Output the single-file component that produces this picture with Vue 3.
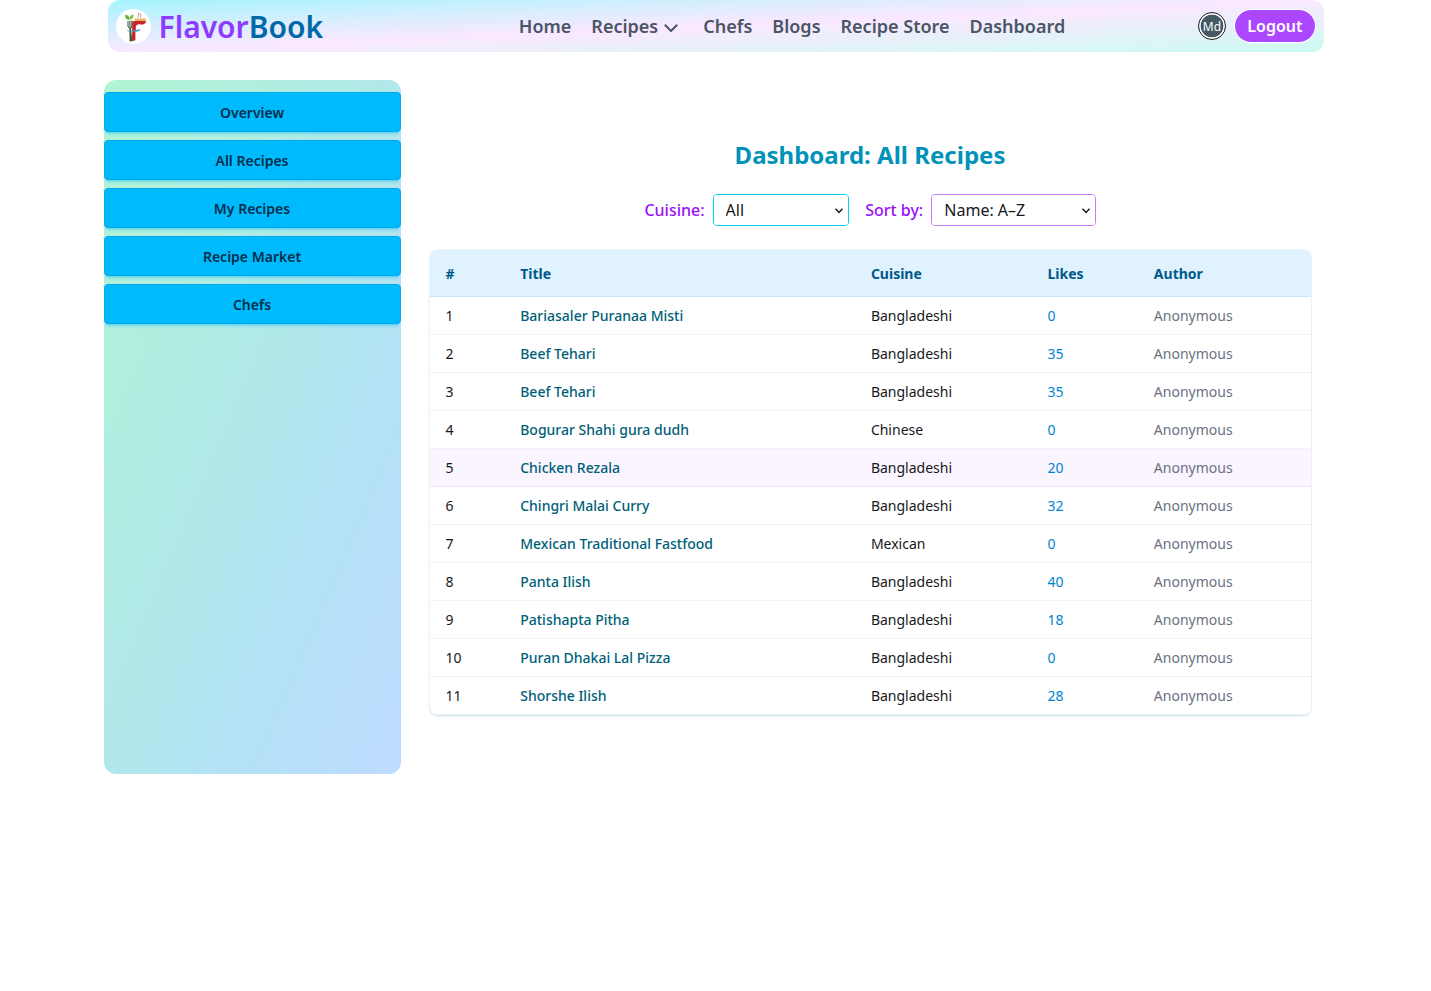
<script setup>
const links = ['Home', 'Recipes', 'Chefs', 'Blogs', 'Recipe Store', 'Dashboard']
const menu = ['Overview', 'All Recipes', 'My Recipes', 'Recipe Market', 'Chefs']
const rows = [
  ['Bariasaler Puranaa Misti', 'Bangladeshi', 0],
  ['Beef Tehari', 'Bangladeshi', 35],
  ['Beef Tehari', 'Bangladeshi', 35],
  ['Bogurar Shahi gura dudh', 'Chinese', 0],
  ['Chicken Rezala', 'Bangladeshi', 20],
  ['Chingri Malai Curry', 'Bangladeshi', 32],
  ['Mexican Traditional Fastfood', 'Mexican', 0],
  ['Panta Ilish', 'Bangladeshi', 40],
  ['Patishapta Pitha', 'Bangladeshi', 18],
  ['Puran Dhakai Lal Pizza', 'Bangladeshi', 0],
  ['Shorshe Ilish', 'Bangladeshi', 28],
]
</script>

<template>
  <div class="page">
    <header class="navbar">
      <div class="brand">
        <svg class="logo" viewBox="0 0 35 35">
          <circle cx="17.5" cy="17.5" r="17.5" fill="#fff" />
          <path d="M13.200 10.800C10 11 9.200 8.500 9 5.800C12 6 13.700 7.500 13.200 10.800Z" fill="#63b238" />
          <path d="M13.400 10.500C13.200 7.500 15 5.800 17.600 5.400C17.700 8.500 16.500 10 13.400 10.500Z" fill="#7cc242" />
          <path d="M22.300 8.600C20.800 7.200 24 6.300 22.600 3.800M24.800 8.600C23.500 7.200 26 6.500 24.600 4.600" fill="none" stroke="#cf7777" stroke-width=".9" />
          <path d="M18.300 9.600H30.200L29.400 12.300H19.500Z" fill="#e5b866" />
          <path d="M16.200 12.600Q17.500 11.600 20 12H30C29.800 14.500 27.800 16.200 25 15.400Q20.500 14.600 19.800 17.500V20.200L19.400 24V31Q17.500 32.500 15.600 31.800L16.200 24Z" fill="#c92228" />
          <path d="M12 12V17Q12.200 19 14 19Q15.800 19 15.800 17V11.500M13.900 11.500V18" fill="none" stroke="#466047" stroke-width="1.100" />
          <path d="M13.300 18.500H14.900L16.300 31.500Q15.300 33.500 13.600 32Z" fill="#455d3e" />
          <path d="M9.300 20.300Q12 22.300 16 21.500Q21 20.500 24.800 20.200Q23 23 17 22.800Q12 23 9.300 20.300Z" fill="#459dbb" />
        </svg>
        <span class="name"><span class="flavor">Flavor</span><span class="book">Book</span></span>
      </div>
      <nav class="links">
        <a v-for="l in links" :key="l">{{ l }}<svg v-if="l === 'Recipes'" class="chev" viewBox="0 0 14 8"><path d="M.8.8L7 7L13.200.8" /></svg></a>
      </nav>
      <div class="user">
        <span class="avatar">Md</span>
        <button class="logout">Logout</button>
      </div>
    </header>

    <div class="body">
      <aside class="side">
        <button v-for="m in menu" :key="m">{{ m }}</button>
      </aside>
      <main>
        <h1>Dashboard: All Recipes</h1>
        <div class="filters">
          <label>Cuisine:</label>
          <div class="field cuisine">
            <select><option>All</option></select>
            <svg viewBox="0 0 8 6"><path d="M.5.8L4 4.500L7.500.8" /></svg>
          </div>
          <label class="second">Sort by:</label>
          <div class="field sort">
            <select><option>Name: A–Z</option></select>
            <svg viewBox="0 0 8 6"><path d="M.5.8L4 4.500L7.500.8" /></svg>
          </div>
        </div>
        <div class="card">
          <div class="row head"><span>#</span><span>Title</span><span>Cuisine</span><span>Likes</span><span>Author</span></div>
          <div v-for="(r, i) in rows" :key="i" class="row" :class="{ active: i === 4 }">
            <span>{{ i + 1 }}</span>
            <span class="title">{{ r[0] }}</span>
            <span>{{ r[1] }}</span>
            <span class="likes">{{ r[2] }}</span>
            <span class="author">Anonymous</span>
          </div>
        </div>
      </main>
    </div>
  </div>
</template>

<style>
body { background: #fff; }
</style>

<style scoped>
.page, .page * { box-sizing: border-box; }
.page { font-family: "Noto Sans", sans-serif; color: #18181b; font-size: 16px; line-height: 24px; height: 991px; overflow: hidden; }
button, select { font-family: inherit; margin: 0; }
.navbar { width: 1216px; height: 52px; margin-left: 107.5px; padding: 0 8.600px 0 8px; border-radius: 12px; display: grid; grid-template-columns: 403.300px 1fr auto; align-items: center; background: linear-gradient(to bottom right in oklab, #a2f4fd, #fae8ff, #cbfbf1); }
.brand { display: flex; align-items: center; gap: 8px; }
.logo { width: 35px; height: 35px; }
.name { font-size: 30px; line-height: 36px; font-weight: 600; padding-top: 2px; }
.flavor { color: #8e3bff; }
.book { color: #0069a8; }
.links { display: flex; gap: 20px; font-size: 18px; line-height: 28px; font-weight: 600; color: #4a5565; white-space: nowrap; }
.links a { display: flex; align-items: center; }
.chev { width: 14px; height: 8px; margin: 3px 5px 0 6px; fill: none; stroke: #4a5565; stroke-width: 2; }
.user { display: flex; align-items: center; gap: 9px; }
.avatar { width: 28px; height: 28px; border-radius: 50%; border: 1px solid #18181b; padding: 0; background: radial-gradient(circle, #455a64 11px, #fff 11.700px); color: #fff; font-size: 12px; line-height: 27px; text-align: center; }
.logout { width: 80px; height: 32px; border: 0; border-radius: 16px; background: #ad46ff; color: #fff; font-size: 16px; font-weight: 600; line-height: 24px; padding: 0; box-shadow: 0 0 0 1px #fff; }
.body { display: flex; margin: 28px 0 0 104px; }
.side { width: 297px; height: 694px; padding-top: 12px; border-radius: 12px; display: flex; flex-direction: column; gap: 8px; background: linear-gradient(to bottom right in oklab, #b0f5d3, #b1e8ea 50%, #b3e2f6 70%, #bedbff); }
.side button { height: 40px; border: 1px solid #00a9ec; border-radius: 4px; background: #00bafe; color: #042e49; font-size: 14px; font-weight: 600; padding: 0 1px 0 0; box-shadow: 0 3px 2px -2px #00bafe4d, 0 4px 3px -2px #00bafe4d; }
main { width: 882px; margin-left: 28px; padding-top: 59px; }
h1 { margin: 0; font-size: 24px; line-height: 32px; font-weight: 700; color: #0092b8; text-align: center; }
.filters { display: flex; justify-content: center; align-items: center; margin-top: 23px; gap: 8px; }
.filters label { color: #9810fa; font-weight: 500; }
.filters .second { margin: 0 -0.600px 0 8.600px; }
.field { position: relative; height: 32px; border: 1px solid; border-radius: 4px; }
.field select { display: block; width: 100%; height: 30px; border: 0; border-radius: 3px; appearance: none; background: #fff; color: #18181b; font-size: 16px; padding: 0 12px; }
.field svg { position: absolute; right: 5px; top: 13px; width: 8px; height: 6px; fill: none; stroke: #18181b; stroke-width: 1.500; pointer-events: none; }
.cuisine { width: 136px; border-color: #00d3f2; }
.sort { width: 165px; border-color: #c27aff; }
.sort select { padding-left: 12.700px; }
.card { margin: 24px 0 0 1px; width: 881px; height: 465px; border-radius: 8px; overflow: hidden; background: #fff; box-shadow: 0 0 0 1px #dff2fe99, 0 1px 3px #0000001a, 0 1px 2px #00000012; }
.row { display: grid; grid-template-columns: 74.700px 350.700px 176.600px 106.400px 1fr; height: 38px; padding-left: 15.500px; align-items: center; border-bottom: 1px solid #f1f2f4; font-size: 14px; line-height: 20px; }
.row:last-child { border-bottom-color: #dff2fe; }
.head { height: 47px; padding-top: 2px; background: #dff2fe; color: #00598a; font-weight: 700; border-color: #cbe5f4; }
.active { background: #faf5ff; border-color: #ebe6ef; }
.title { font-weight: 500; color: #005f78; }
.likes { color: #0084d1; }
.author { color: #6a7282; }
</style>
